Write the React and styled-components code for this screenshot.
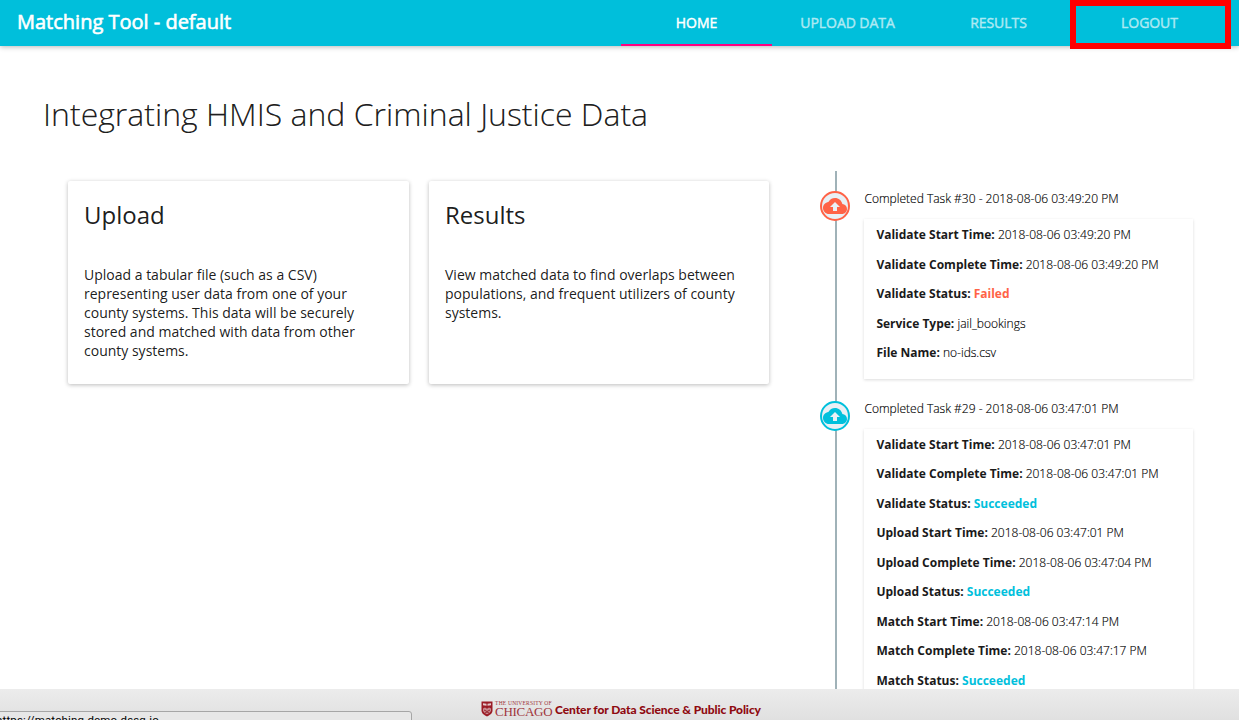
import React from 'react';
import styled, { createGlobalStyle } from 'styled-components';

const GlobalStyle = createGlobalStyle`
  * { box-sizing: border-box; }
  body { margin: 0; background: #fff; color: rgba(0, 0, 0, 0.9); font-family: "Open Sans", sans-serif; overflow: hidden; }
  h1, h2, p { margin: 0; font-weight: 400; }
`;

const Page = styled.div`
  height: 720px;
  display: flex;
  flex-direction: column;
  overflow: hidden;
  position: relative;
`;

const Header = styled.header`
  flex: none;
  height: 46px;
  display: flex;
  justify-content: space-between;
  padding: 0 14px 0 17px;
  background: #00bfdb;
  box-shadow: 0 1px 5px rgba(0, 0, 0, 0.28);
  position: relative;
`;

const Brand = styled.div`
  color: #fff;
  font-size: 20px;
  font-weight: 500;
  -webkit-text-stroke: 0.6px #fff;
  line-height: 43px;
  white-space: nowrap;
`;

const Nav = styled.nav`
  display: flex;
`;

const Tab = styled.a`
  width: 151px;
  height: 46px;
  text-align: center;
  font-size: 14px;
  font-weight: 500;
  -webkit-text-stroke: 0.45px currentColor;
  line-height: 46px;
  letter-spacing: -0.05px;
  color: ${(p) => (p.$active ? '#fff' : '#aee9f3')};
  border-bottom: 2px solid ${(p) => (p.$active ? '#ff0080' : 'transparent')};
`;

const Highlight = styled.div`
  position: absolute;
  left: 1070px;
  top: 0;
  width: 161px;
  height: 49px;
  border: 6px solid #f00;
`;

const Main = styled.main`
  flex: 1;
  min-height: 0;
  padding: 44px 40px 0 43px;
  display: flex;
  flex-direction: column;
`;

const Title = styled.h1`
  flex: none;
  height: 81px;
  font-size: 32px;
  font-weight: 300;
  line-height: 48px;
  white-space: nowrap;
  -webkit-text-stroke: 0.15px currentColor;
`;

const Columns = styled.div`
  display: flex;
  flex: 1;
  min-height: 0;
`;

const Cards = styled.section`
  display: grid;
  grid-template-columns: 341px 340px;
  column-gap: 20px;
  align-items: start;
  padding: 10px 0 0 25px;
  width: 777px;
`;

const Card = styled.article`
  height: 203px;
  padding: 16px;
  background: #fff;
  border-radius: 2px;
  box-shadow: 0 1px 4px rgba(0, 0, 0, 0.27);
`;

const CardTitle = styled.h2`
  font-size: 24px;
  line-height: 36px;
  margin-bottom: 32px;
`;

const CardText = styled.p`
  font-size: 14px;
  line-height: 19px;
  white-space: pre-line;
`;

const Timeline = styled.section`
  flex: 1;
  overflow: hidden;
  position: relative;
  padding-top: 20px;
  &::before {
    content: "";
    position: absolute;
    left: 15px;
    top: 0;
    bottom: 0;
    width: 2px;
    background: #a0b2b8;
  }
`;

const Event = styled.div`
  display: grid;
  grid-template-columns: 30px 329px;
  column-gap: 14px;
  margin-bottom: 21.75px;
  position: relative;
`;

const Marker = styled.div`
  width: 30px;
  height: 30px;
  border: 2px solid ${(p) => p.$color};
  border-radius: 50%;
  background: #e9f0f5;
  color: ${(p) => p.$color};
  display: flex;
  align-items: center;
  justify-content: center;
`;

const EventTitle = styled.div`
  height: 28px;
  font-size: 12px;
  font-weight: 300;
  line-height: 15px;
  padding-left: 0.5px;
  white-space: nowrap;
  color: #000;
  -webkit-text-stroke: 0.15px currentColor;
`;

const Details = styled.div`
  height: ${(p) => p.$height}px;
  padding: 1px 12.4px 0;
  background: #fff;
  box-shadow: 0 1px 3px rgba(0, 0, 0, 0.14);
`;

const Detail = styled.div`
  height: 29.5px;
  font-size: 12px;
  font-weight: 300;
  line-height: 30px;
  white-space: nowrap;
  color: #000;
  -webkit-text-stroke: 0.15px currentColor;
`;

const Label = styled.span`
  font-weight: 700;
  color: #1a1a1a;
  -webkit-text-stroke: 0;
`;

const Status = styled.span`
  font-weight: 700;
  color: ${(p) => p.$color};
  -webkit-text-stroke: 0;
`;

const Footer = styled.footer`
  flex: none;
  height: 31px;
  display: flex;
  justify-content: center;
  padding: 12px 0 0 3px;
  background: linear-gradient(#ececec, #e0e0e0);
`;

const University = styled.div`
  width: 57px;
  margin: 0 3px 0 2px;
  color: #a0343c;
  font-family: "Liberation Serif", serif;
  white-space: nowrap;
`;

const UniversityTop = styled.div`
  font-size: 5.5px;
  line-height: 5px;
  letter-spacing: 0.2px;
`;

const UniversityName = styled.div`
  font-size: 13px;
  line-height: 12px;
  letter-spacing: -0.3px;
`;

const Center = styled.div`
  font-family: Lato, sans-serif;
  font-size: 12px;
  font-weight: 900;
  line-height: 17px;
  letter-spacing: -0.1px;
  color: #8f0a10;
  white-space: nowrap;
`;

const LinkPreview = styled.div`
  position: absolute;
  left: -5px;
  top: 711px;
  width: 417px;
  height: 18px;
  border: 1px solid #a6a6a6;
  border-radius: 3px;
  background: #e7e7e7;
  font-family: Roboto, sans-serif;
  font-size: 11.5px;
  line-height: 17px;
  letter-spacing: 0.17px;
  color: #000;
`;

const CloudUpload = () => (
  <svg width="24" height="24" viewBox="0 0 24 24" fill="currentColor">
    <path d="M19.35 10.04C18.67 6.59 15.64 4 12 4 9.11 4 6.6 5.64 5.35 8.04 2.34 8.36 0 10.91 0 14c0 3.31 2.69 6 6 6h13c2.76 0 5-2.24 5-5 0-2.64-2.05-4.78-4.65-4.96zM14 13v4h-4v-4H7l5-5 5 5h-3z" />
  </svg>
);

const Shield = () => (
  <svg width="12" height="16" viewBox="0 0 12 16">
    <path d="M.5.5h11v9c0 3-3 4.800-5.500 6-2.500-1.200-5.500-3-5.500-6z" fill="#9b1c26" />
    <path d="M2 2.200l3.500.6v2L2 4.300zM10 2.200l-3.500.6v2l3.500-.5z" fill="#e5c9cc" />
    <path d="M2 7.500l2-1 2 1.200 2-1.200 2 1v2.500l-2 2.200-2 1-2-1-2-2.200z" fill="#c98a90" />
    <path d="M3 9l3 1.500L9 9M4 12l2-1 2 1" stroke="#8b0c14" strokeWidth=".8" fill="none" />
  </svg>
);

const RED = '#ff6347';
const BLUE = '#00c0dc';

const events = [
  {
    title: 'Completed Task #30 - 2018-08-06 03:49:20 PM',
    color: RED,
    height: 160,
    rows: [
      ['Validate Start Time:', '2018-08-06 03:49:20 PM'],
      ['Validate Complete Time:', '2018-08-06 03:49:20 PM'],
      ['Validate Status:', 'Failed', RED],
      ['Service Type:', 'jail_bookings'],
      ['File Name:', 'no-ids.csv'],
    ],
  },
  {
    title: 'Completed Task #29 - 2018-08-06 03:47:01 PM',
    color: BLUE,
    height: 340,
    rows: [
      ['Validate Start Time:', '2018-08-06 03:47:01 PM'],
      ['Validate Complete Time:', '2018-08-06 03:47:01 PM'],
      ['Validate Status:', 'Succeeded', BLUE],
      ['Upload Start Time:', '2018-08-06 03:47:01 PM'],
      ['Upload Complete Time:', '2018-08-06 03:47:04 PM'],
      ['Upload Status:', 'Succeeded', BLUE],
      ['Match Start Time:', '2018-08-06 03:47:14 PM'],
      ['Match Complete Time:', '2018-08-06 03:47:17 PM'],
      ['Match Status:', 'Succeeded', BLUE],
    ],
  },
];

export default function App() {
  return (
    <Page>
      <GlobalStyle />
      <Header>
        <Brand>Matching Tool - default</Brand>
        <Nav>
          <Tab $active>HOME</Tab>
          <Tab>UPLOAD DATA</Tab>
          <Tab>RESULTS</Tab>
          <Tab>LOGOUT</Tab>
        </Nav>
      </Header>
      <Main>
        <Title>Integrating HMIS and Criminal Justice Data</Title>
        <Columns>
          <Cards>
            <Card>
              <CardTitle>Upload</CardTitle>
              <CardText>
                {'Upload a tabular file (such as a CSV)\nrepresenting user data from one of your\ncounty systems. This data will be securely\nstored and matched with data from other\ncounty systems.'}
              </CardText>
            </Card>
            <Card>
              <CardTitle>Results</CardTitle>
              <CardText>
                {'View matched data to find overlaps between\npopulations, and frequent utilizers of county\nsystems.'}
              </CardText>
            </Card>
          </Cards>
          <Timeline>
            {events.map((e) => (
              <Event key={e.title}>
                <Marker $color={e.color}><CloudUpload /></Marker>
                <div>
                  <EventTitle>{e.title}</EventTitle>
                  <Details $height={e.height}>
                    {e.rows.map(([label, value, color]) => (
                      <Detail key={label}>
                        <Label>{label}</Label>{' '}
                        {color ? <Status $color={color}>{value}</Status> : value}
                      </Detail>
                    ))}
                  </Details>
                </div>
              </Event>
            ))}
          </Timeline>
        </Columns>
      </Main>
      <Footer>
        <Shield />
        <University>
          <UniversityTop>THE UNIVERSITY OF</UniversityTop>
          <UniversityName>CHICAGO</UniversityName>
        </University>
        <Center>Center for Data Science &amp; Public Policy</Center>
      </Footer>
      <LinkPreview>https://matching-demo.dssg.io</LinkPreview>
      <Highlight />
    </Page>
  );
}
